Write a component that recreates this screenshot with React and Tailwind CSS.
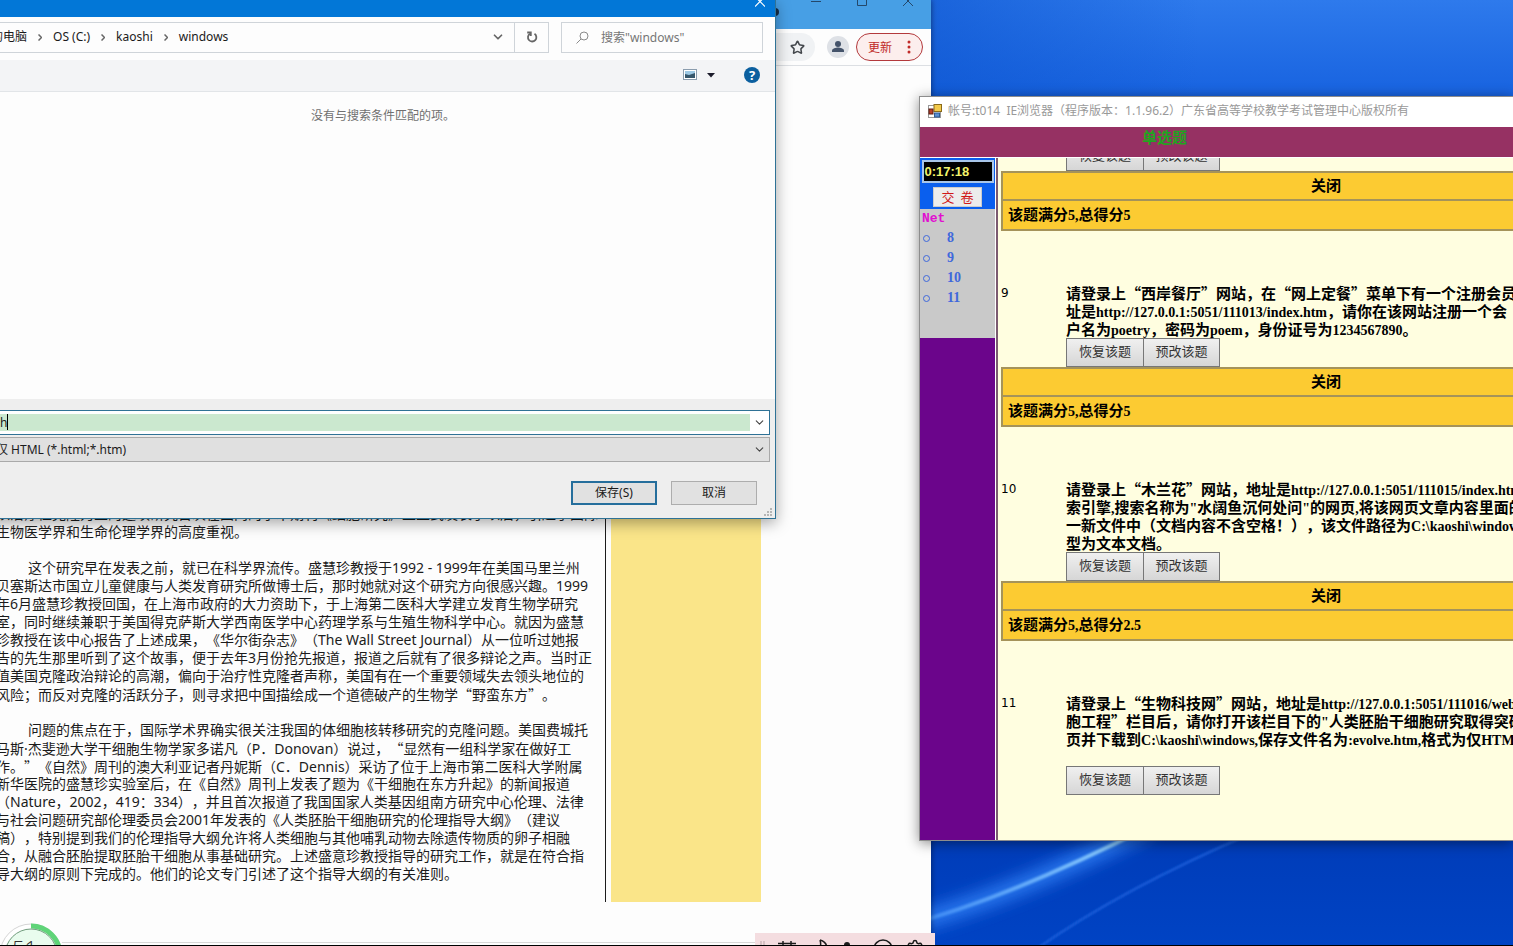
import React from "react";
import { ChevronDown, Settings, Star } from "lucide-react";

const article = [
  { text: "以治疗性克隆为主的这项研究首次在国内的学术期刊《细胞研究》上正式发表了以后，引起了国际" },
  { text: "生物医学界和生命伦理学界的高度重视。" },
  { text: "" },
  { text: "这个研究早在发表之前，就已在科学界流传。盛慧珍教授于1992 - 1999年在美国马里兰州", indent: true },
  { text: "贝塞斯达市国立儿童健康与人类发育研究所做博士后，那时她就对这个研究方向很感兴趣。1999" },
  { text: "年6月盛慧珍教授回国，在上海市政府的大力资助下，于上海第二医科大学建立发育生物学研究" },
  { text: "室，同时继续兼职于美国得克萨斯大学西南医学中心药理学系与生殖生物科学中心。就因为盛慧" },
  { text: "珍教授在该中心报告了上述成果，《华尔街杂志》（The Wall Street Journal）从一位听过她报" },
  { text: "告的先生那里听到了这个故事，便于去年3月份抢先报道，报道之后就有了很多辩论之声。当时正" },
  { text: "值美国克隆政治辩论的高潮，偏向于治疗性克隆者声称，美国有在一个重要领域失去领头地位的" },
  { text: "风险；而反对克隆的活跃分子，则寻求把中国描绘成一个道德破产的生物学“野蛮东方”。" },
  { text: "" },
  { text: "问题的焦点在于，国际学术界确实很关注我国的体细胞核转移研究的克隆问题。美国费城托", indent: true },
  { text: "马斯·杰斐逊大学干细胞生物学家多诺凡（P．Donovan）说过，“显然有一组科学家在做好工" },
  { text: "作。”《自然》周刊的澳大利亚记者丹妮斯（C．Dennis）采访了位于上海市第二医科大学附属" },
  { text: "新华医院的盛慧珍实验室后，在《自然》周刊上发表了题为《干细胞在东方升起》的新闻报道" },
  { text: "（Nature，2002，419：334），并且首次报道了我国国家人类基因组南方研究中心伦理、法律" },
  { text: "与社会问题研究部伦理委员会2001年发表的《人类胚胎干细胞研究的伦理指导大纲》（建议" },
  { text: "稿），特别提到我们的伦理指导大纲允许将人类细胞与其他哺乳动物去除遗传物质的卵子相融" },
  { text: "合，从融合胚胎提取胚胎干细胞从事基础研究。上述盛意珍教授指导的研究工作，就是在符合指" },
  { text: "导大纲的原则下完成的。他们的论文专门引述了这个指导大纲的有关准则。" },
];

const questions = [
  {
    no: "9",
    lines: [
      "请登录上“西岸餐厅”网站，在“网上定餐”菜单下有一个注册会员",
      "址是http://127.0.0.1:5051/111013/index.htm，请你在该网站注册一个会",
      "户名为poetry，密码为poem，身份证号为1234567890。",
    ],
    score: "该题满分5,总得分5",
  },
  {
    no: "10",
    lines: [
      "请登录上“木兰花”网站，地址是http://127.0.0.1:5051/111015/index.htm",
      "索引擎,搜索名称为\"水阔鱼沉何处问\"的网页,将该网页文章内容里面的",
      "一新文件中（文档内容不含空格！），该文件路径为C:\\kaoshi\\windows",
      "型为文本文档。",
    ],
    score: "该题满分5,总得分2.5",
  },
  {
    no: "11",
    lines: [
      "请登录上“生物科技网”网站，地址是http://127.0.0.1:5051/111016/web",
      "胞工程”栏目后，请你打开该栏目下的\"人类胚胎干细胞研究取得突破",
      "页并下载到C:\\kaoshi\\windows,保存文件名为:evolve.htm,格式为仅HTML",
      "",
    ],
  },
];

// Curly quotes take the full-width form of the CJK font
const ArticleLine = ({ text }) =>
  text.split(/([“”])/).map((part, i) =>
    part === "“" || part === "”" ? (
      <span key={i} className="font-['Noto_Sans_CJK_SC',sans-serif]">
        {part}
      </span>
    ) : (
      part
    )
  );

// Chinese at 15px, latin words and numbers one size smaller in serif
const ExamText = ({ text }) =>
  text.split(/([\x20-\x7e]+)/).map((part, i) =>
    i % 2 === 1 ? (
      <span key={i} className="text-[14px] font-['Liberation_Serif',serif]">
        {part}
      </span>
    ) : (
      part
    )
  );

const Wallpaper = () => (
  <svg
    className="absolute inset-0 w-full h-full"
    viewBox="0 0 1513 946"
    preserveAspectRatio="none"
    aria-hidden="true"
  >
    <defs>
      <linearGradient id="sky" x1="0" y1="0" x2="0" y2="1">
        <stop offset="0" stopColor="#2e7aec" />
        <stop offset="0.1" stopColor="#1863e0" />
        <stop offset="0.88" stopColor="#003cb8" />
        <stop offset="1" stopColor="#0043c4" />
      </linearGradient>
      <linearGradient id="edge" x1="931" y1="0" x2="1200" y2="0" gradientUnits="userSpaceOnUse">
        <stop offset="0" stopColor="#0d55d0" stopOpacity="0.6" />
        <stop offset="1" stopColor="#0d55d0" stopOpacity="0" />
      </linearGradient>
      <linearGradient id="ray" x1="931" y1="0" x2="1130" y2="0" gradientUnits="userSpaceOnUse">
        <stop offset="0" stopColor="#3f8cf5" />
        <stop offset="1" stopColor="#8fd0ff" />
      </linearGradient>
      <filter id="glow" x="-20%" y="-50%" width="140%" height="200%">
        <feGaussianBlur stdDeviation="8" />
      </filter>
      <filter id="soft">
        <feGaussianBlur stdDeviation="1" />
      </filter>
    </defs>
    <rect width="1513" height="946" fill="url(#sky)" />
    <rect width="1513" height="120" fill="url(#edge)" />
    <path d="M900 926Q1010 898 1150 826" stroke="#2a78f0" strokeWidth="18" fill="none" filter="url(#glow)" />
    <path d="M900 927Q1010 898 1150 826" stroke="url(#ray)" strokeWidth="4" fill="none" filter="url(#soft)" />
    <path d="M1035 950Q1120 890 1250 834" stroke="#1f60dc" strokeWidth="2" fill="none" filter="url(#soft)" />
  </svg>
);

const BrowserWindow = () => (
  <section className="absolute left-0 top-0 w-[931px] h-full bg-[#fdfdfd] flex flex-col overflow-hidden shadow-[0_0_6px_rgba(0,0,0,0.5)]">
    <div className="h-[29px] shrink-0 bg-[#479fe5] flex justify-end items-start text-[#24486b]">
      <span className="mt-2 mr-[14px] size-2 rounded-full bg-[#152c46]" />
      <button aria-label="最小化" className="w-[46px] h-3 flex justify-center">
        <svg width="10" height="8" viewBox="0 0 10 8" stroke="currentColor">
          <path d="M0 1.5h10" />
        </svg>
      </button>
      <button aria-label="最大化" className="w-[46px] h-3 flex justify-center">
        <svg width="10" height="8" viewBox="0 0 10 8" fill="none" stroke="currentColor">
          <path d="M0.5 -4.5h9v10h-9z" />
        </svg>
      </button>
      <button aria-label="关闭" className="w-[46px] h-3 flex justify-center">
        <svg width="10" height="8" viewBox="0 0 10 8" fill="none" stroke="currentColor">
          <path d="M0 -4l10 10M10 -4l-10 10" />
        </svg>
      </button>
    </div>
    <div className="h-[37px] shrink-0 border-b border-[#dcdfe3] flex justify-end items-center pr-2">
      <div className="w-[500px] h-7 rounded-full bg-[#f0f2f4] flex items-center justify-end pr-[10px]">
        <button aria-label="收藏" className="text-[#44484d]">
          <Star size={15} strokeWidth={2.5} />
        </button>
      </div>
      <button aria-label="用户" className="ml-3 size-[22px] rounded-full bg-[#dee1e6]">
        <svg viewBox="0 0 22 22" fill="#44536a">
          <circle cx="11" cy="8" r="3" />
          <path d="M5 16v-1.500c0-2 4-3 6-3s6 1 6 3v1.500z" />
        </svg>
      </button>
      <button className="ml-[7px] w-[67px] h-7 rounded-full border border-[#b3393c] bg-[#fceeed] text-[#c02a28] text-[12px] flex items-center justify-between pl-[11px] pr-[11px]">
        更新
        <svg width="4" height="14" viewBox="0 0 4 14" fill="currentColor">
          <circle cx="2" cy="2" r="1.500" />
          <circle cx="2" cy="7" r="1.500" />
          <circle cx="2" cy="12" r="1.500" />
        </svg>
      </button>
    </div>
    <div className="flex-1 flex items-start pt-[439px]">
      <article className="w-[609px] h-[397px] border-r border-[#1c1c1c] -ml-1 mr-[5px] box-content text-[14px] leading-[18px] text-[#1b1b1b] whitespace-nowrap shrink-0 font-['Noto_Sans','Noto_Sans_CJK_SC',sans-serif]">
        {article.map((line, i) => (
          <p key={i} className={line.indent ? "h-[18px] pl-8" : "h-[18px]"}>
            <ArticleLine text={line.text} />
          </p>
        ))}
      </article>
      <aside className="w-[150px] h-[397px] bg-[#fae589]" />
    </div>
  </section>
);

const Arrow = () => (
  <svg width="4" height="7" viewBox="0 0 4 7" fill="none" stroke="#666" strokeWidth="1.500" className="mx-[11px]">
    <path d="M0.500 0.500l3 3-3 3" />
  </svg>
);

const SaveDialog = () => (
  <section className="absolute -left-6 top-0 w-[800px] h-[519px] border-r border-b border-[#2f7296] bg-[#fdfdfd] flex flex-col text-[12px] text-[#1a1a1a] shadow-[0_4px_14px_rgba(0,0,0,0.35)]">
    <div className="h-[17px] shrink-0 bg-[#0277d7] flex justify-end pr-[10px]">
      <button aria-label="关闭" className="h-2">
        <svg width="10" height="8" viewBox="0 0 10 8" fill="none" stroke="#fff" strokeWidth="1.200">
          <path d="M0 -3.500l10 10M10 -3.500l-10 10" />
        </svg>
      </button>
    </div>
    <div className="h-[43px] shrink-0 flex items-center px-3 pl-0 pb-[2px]">
      <nav className="flex-1 h-[31px] border border-[#cfd4d9] flex items-center pl-[2px] pb-px whitespace-nowrap font-['Noto_Sans','Noto_Sans_CJK_SC',sans-serif]">
        <a href="#pc">我的电脑</a>
        <Arrow />
        <a href="#c">OS (C:)</a>
        <Arrow />
        <a href="#kaoshi">kaoshi</a>
        <Arrow />
        <a href="#windows">windows</a>
        <button aria-label="历史记录" className="ml-auto mr-[9px] text-[#666]">
          <ChevronDown size={14} strokeWidth={3} />
        </button>
        <button aria-label="刷新" className="w-[34px] h-[29px] border-l border-[#cfd4d9] flex items-center justify-center">
          <svg width="12" height="12" viewBox="0 0 12 12" fill="none" stroke="#666" strokeWidth="1.800">
            <path d="M8.500 2.800A4.200 4.200 0 1 1 4 2.700" />
            <path d="M1.200 1.500h3.600v3.600" />
          </svg>
        </button>
      </nav>
      <label className="ml-3 w-[202px] h-[31px] border border-[#cfd4d9] flex items-center pl-[14px] text-[#888]">
        <svg width="13" height="13" viewBox="0 0 13 13" fill="none" stroke="#8a8a8a" className="shrink-0">
          <circle cx="8" cy="5" r="4" />
          <path d="M5 8l-4.500 4.500" />
        </svg>
        <input
          aria-label="搜索"
          placeholder={'搜索"windows"'}
          className="ml-3 w-full outline-none placeholder:text-[#767676] font-['Noto_Sans','Noto_Sans_CJK_SC',sans-serif]"
        />
      </label>
    </div>
    <div className="h-8 shrink-0 bg-[#f3f4f6] border-b border-[#e2e5e8] flex items-center justify-end pr-[15px] pb-px">
      <button aria-label="更改视图" className="flex items-center">
        <svg width="14" height="12" viewBox="0 0 14 12">
          <rect x="0.500" y="0.500" width="13" height="10" fill="#fff" stroke="#8b9dae" />
          <rect x="2" y="2" width="10" height="7" fill="#9cc8e4" />
          <path d="M2 5l4 1 6-2v5H2z" fill="#35566b" />
        </svg>
        <svg width="8" height="5" viewBox="0 0 8 5" className="ml-[10px]">
          <path d="M0 0h8L4 4.500z" fill="#1b1b2b" />
        </svg>
      </button>
      <button
        aria-label="帮助"
        className="ml-[29px] size-4 rounded-full bg-[#0b5f9f] text-white text-[13px] leading-4 font-bold font-['Noto_Sans',sans-serif]"
      >
        ?
      </button>
    </div>
    <p className="h-[307px] shrink-0 pt-[14px] pl-[15px] text-center text-[#707070] leading-[18px]">
      没有与搜索条件匹配的项。
    </p>
    <div className="flex-1 bg-[#eeeeee] pt-[11px] pr-[5px] flex flex-col relative font-['Noto_Sans','Noto_Sans_CJK_SC',sans-serif]">
      <div className="h-[25px] border border-[#2f7296] bg-white flex items-center relative">
        <input
          aria-label="文件名"
          defaultValue="h"
          className="h-[17px] flex-1 bg-[#cbe8cf] pl-[23px] outline-none"
        />
        <span className="absolute left-[30px] top-[3px] w-px h-4 bg-black" />
        <ChevronDown size={13} strokeWidth={2} className="mx-[3px] text-[#444]" />
      </div>
      <div className="mt-[2px] h-[25px] border border-[#a9a9a9] bg-[#e0e0e0] flex items-center">
        <select aria-label="保存类型" className="h-full flex-1 appearance-none pl-[19px] outline-none">
          <option>仅 HTML (*.html;*.htm)</option>
        </select>
        <ChevronDown size={13} strokeWidth={2} className="mx-[3px] text-[#444]" />
      </div>
      <div className="mt-[19px] flex justify-end gap-[14px] pr-[13px]">
        <button className="w-[86px] h-6 border-2 border-[#256e9c] bg-[#e1e1e1] leading-none">保存(S)</button>
        <button className="w-[86px] h-6 border border-[#adadad] bg-[#e1e1e1] leading-none">取消</button>
      </div>
      <svg width="8" height="8" viewBox="0 0 8 8" fill="#b5b5b5" className="absolute right-[3px] bottom-[2px]">
        <path d="M6 0h2v2h-2zM3 3h2v2h-2zM6 3h2v2h-2zM0 6h2v2h-2zM3 6h2v2h-2zM6 6h2v2h-2z" />
      </svg>
    </div>
  </section>
);

const QuestionButtons = () => (
  <div className="ml-[65px] flex text-[13px] text-[#333]">
    <button className="w-[78px] h-[29px] pb-1 border border-[#777] bg-linear-to-b from-[#f0f0f0] to-[#d6d6d6] leading-none">
      恢复该题
    </button>
    <button className="w-[77px] -ml-px h-[29px] pb-1 border border-[#777] bg-linear-to-b from-[#f0f0f0] to-[#d6d6d6] leading-none">
      预改该题
    </button>
  </div>
);

const ScoreTable = ({ score }) => (
  <table className="w-[650px] border-collapse bg-[#fccb32] text-[15px] leading-[18px] font-bold">
    <tbody>
      <tr className="h-[28px]">
        <td className="border-2 border-[#a5935a] p-0 pb-[2px] text-center">关闭</td>
      </tr>
      <tr className="h-[30px]">
        <td className="border-2 border-[#a5935a] p-0 pl-[5px]">
          <ExamText text={score} />
        </td>
      </tr>
    </tbody>
  </table>
);

const ExamWindow = () => (
  <section className="absolute left-[919px] right-0 top-[96px] h-[745px] border-l border-t border-b border-[#8d8d8d] bg-white flex flex-col overflow-hidden shadow-[0_2px_12px_rgba(0,0,0,0.45)]">
    <header className="h-[30px] shrink-0 flex items-center pl-2 pb-[2px] gap-[6px] text-[12px] text-[#999] whitespace-nowrap font-['Noto_Sans','Noto_Sans_CJK_SC',sans-serif]">
      <svg width="14" height="14" viewBox="0 0 14 14" className="shrink-0">
        <rect x="0.500" y="1.500" width="12" height="12" fill="#fff" stroke="#999" />
        <rect x="6" y="0.500" width="7.500" height="7" fill="#f2c94a" stroke="#8a6a1a" />
        <rect x="1" y="5" width="4" height="5" fill="#b8402a" stroke="#5c1c12" />
        <rect x="6.500" y="9" width="5" height="4" fill="#5c8ed0" stroke="#2f5a94" />
      </svg>
      <span className="whitespace-pre">帐号:t014  IE浏览器（程序版本：1.1.96.2）广东省高等学校教学考试管理中心版权所有</span>
    </header>
    <div className="h-[30px] shrink-0 bg-[#963163] pl-[222px] text-[15px] leading-5 font-bold text-[#1fa51f]">单选题</div>
    <div className="flex-1 mt-px flex overflow-hidden">
      <aside className="w-[75px] shrink-0 flex flex-col bg-[#6b058b]">
        <div className="h-[51px] bg-[#0a5fee] pt-[2px] flex flex-col items-center">
          <div className="w-[72px] h-[23px] bg-black border-2 border-[#a9c6e8] pl-px text-[13px] leading-5 font-bold text-[#f3f36b] font-['Liberation_Sans',sans-serif]">
            0:17:18
          </div>
          <button className="mt-1 w-[49px] h-5 pb-[2px] bg-[#ececec] border border-[#ccc] text-[13px] leading-none text-[#d01818] whitespace-pre">
            交  卷
          </button>
        </div>
        <div className="h-[129px] bg-[#c9c9c9] pl-[2px]">
          <h2 className="h-[19px] text-[13px] leading-[19px] font-bold text-[#e010d0] font-['Liberation_Mono',monospace]">Net</h2>
          <ul className="text-[14px] leading-5 font-bold text-[#3f68dc] font-['Liberation_Serif',serif]">
            {["8", "9", "10", "11"].map((n) => (
              <li key={n}>
                <a href={`#q${n}`} className="flex items-center">
                  <span className="ml-px mr-[17px] size-[7px] rounded-full border border-[#3f68dc]" />
                  {n}
                </a>
              </li>
            ))}
          </ul>
        </div>
      </aside>
      <div className="ml-px w-[2px] shrink-0 bg-[#7b5a70]" />
      <main className="flex-1 min-w-0 bg-[#fffee0] overflow-hidden pl-[3px]">
        <div className="-mt-4">
          <QuestionButtons />
          <ScoreTable score="该题满分5,总得分5" />
        </div>
        {questions.map((q) => (
          <section key={q.no} id={`q${q.no}`} className="pt-[53px]">
            <div className="flex whitespace-nowrap text-black">
              <span className="w-[65px] shrink-0 text-[12px] leading-[18px] font-['DejaVu_Sans',sans-serif]">{q.no}</span>
              <div className="text-[15px] leading-[18px] font-bold">
                {q.lines.map((line, i) => (
                  <p key={i} className="h-[18px]">
                    <ExamText text={line} />
                  </p>
                ))}
              </div>
            </div>
            <QuestionButtons />
            {q.score && <ScoreTable score={q.score} />}
          </section>
        ))}
      </main>
    </div>
  </section>
);

const RecorderBadge = () => (
  <svg width="64" height="28" viewBox="0 0 64 28" className="absolute left-0 bottom-0" aria-hidden="true">
    <circle cx="31" cy="37" r="31" fill="#fff" stroke="#d5d5d5" />
    <path d="M31 8a29 29 0 0 1 29 29" stroke="#5fd478" strokeWidth="5" fill="none" />
    <circle cx="31" cy="37" r="26" fill="#e9fcee" stroke="#6f9c7c" />
    <text x="12" y="39" fontSize="22" fill="#333" fontFamily="Open Sans" fontWeight="300">
      51
    </text>
  </svg>
);

const InputMethodBar = () => (
  <div className="absolute left-[755px] bottom-0 w-[180px] h-[13px] bg-[#f4dde0] overflow-hidden">
    <svg width="180" height="13" viewBox="0 0 180 13" fill="none" stroke="#1b1b1b" strokeWidth="1.500">
      <path d="M6 8v5M9 8v5" stroke="#b9a5a8" strokeWidth="1" />
      <path d="M23 10.500h18M28 8v5M36 8v5" />
      <path d="M65 7c4 1 7 4 7 9M65 7c1 3 1 5 0 8" />
      <circle cx="92" cy="12" r="3" fill="#1b1b1b" stroke="none" />
      <circle cx="128" cy="16" r="9" />
    </svg>
    <Settings size={18} strokeWidth={2} className="absolute left-[151px] top-[6px] text-[#1b1b1b]" />
  </div>
);

const App = () => (
  <div className="relative h-screen overflow-hidden bg-[#003cb8] font-['Noto_Sans_CJK_SC','Noto_Sans',sans-serif] [text-spacing-trim:space-all]">
    <Wallpaper />
    <BrowserWindow />
    <SaveDialog />
    <ExamWindow />
    <div className="absolute left-[62px] bottom-[3px] w-[693px] h-px bg-[#d8d8d8]" />
    <RecorderBadge />
    <InputMethodBar />
    <div className="absolute left-0 right-0 bottom-0 h-px bg-black" />
  </div>
);

export default App;
